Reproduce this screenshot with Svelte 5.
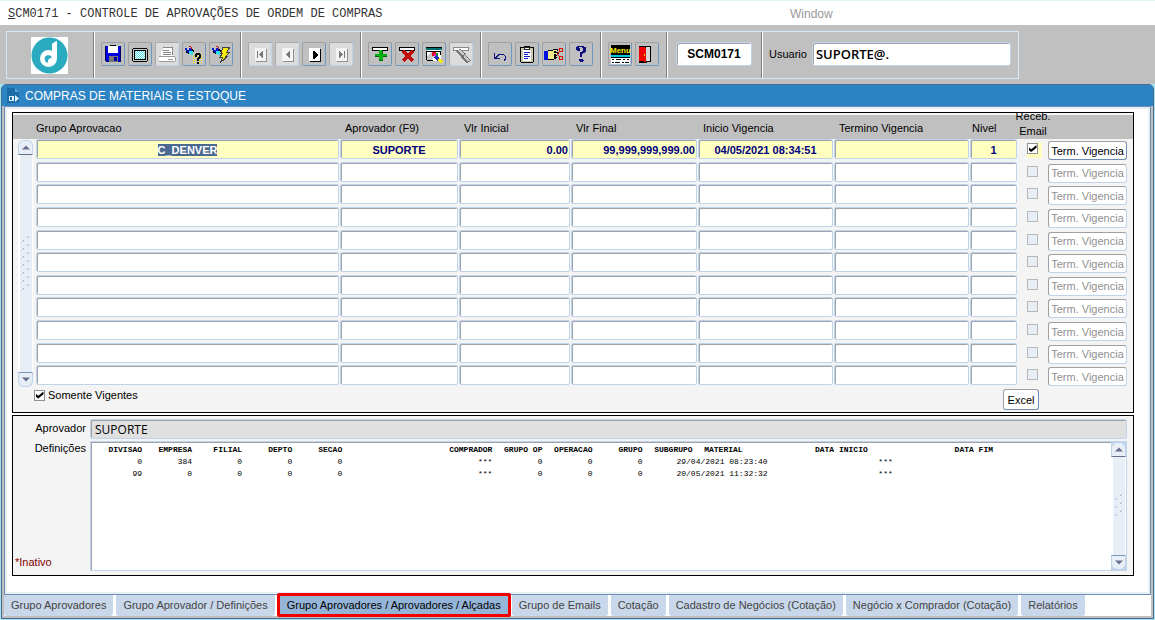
<script>
	import { onMount } from 'svelte';

	const emptyRow = {
		grupo: '',
		aprovador: '',
		vlrInicial: '',
		vlrFinal: '',
		inicio: '',
		termino: '',
		nivel: '',
		email: false
	};

	let rows = $state([
		{
			grupo: 'C_DENVER',
			aprovador: 'SUPORTE',
			vlrInicial: '0.00',
			vlrFinal: '99,999,999,999.00',
			inicio: '04/05/2021 08:34:51',
			termino: '',
			nivel: '1',
			email: true
		},
		...Array.from({ length: 10 }, () => ({ ...emptyRow }))
	]);

	const columns = [
		{ key: 'grupo', label: 'Grupo Aprovacao' },
		{ key: 'aprovador', label: 'Aprovador (F9)' },
		{ key: 'vlrInicial', label: 'Vlr Inicial' },
		{ key: 'vlrFinal', label: 'Vlr Final' },
		{ key: 'inicio', label: 'Inicio Vigencia' },
		{ key: 'termino', label: 'Termino Vigencia' },
		{ key: 'nivel', label: 'Nivel' }
	];

	const definitions = [
		{ values: ['0', '384', '0', '0', '0', '***', '0', '0', '0'], inicio: '29/04/2021 08:23:40', fim: '***' },
		{ values: ['99', '0', '0', '0', '0', '***', '0', '0', '0'], inicio: '20/05/2021 11:32:32', fim: '***' }
	];

	const toolGroups = [
		[
			{ icon: 'save', label: 'Salvar' },
			{ icon: 'screen', label: 'Tela' },
			{ icon: 'print', label: 'Imprimir', disabled: true },
			{ icon: 'query', label: 'Entrar consulta' },
			{ icon: 'execute', label: 'Executar consulta' }
		],
		[
			{ icon: 'first', label: 'Primeiro', disabled: true },
			{ icon: 'prev', label: 'Anterior', disabled: true },
			{ icon: 'next', label: 'Proximo' },
			{ icon: 'last', label: 'Ultimo', disabled: true }
		],
		[
			{ icon: 'add', label: 'Inserir' },
			{ icon: 'remove', label: 'Remover' },
			{ icon: 'clear', label: 'Limpar' },
			{ icon: 'erase', label: 'Apagar', disabled: true }
		],
		[
			{ icon: 'undo', label: 'Desfazer' },
			{ icon: 'list', label: 'Lista de valores' },
			{ icon: 'cut', label: 'Editar' },
			{ icon: 'help', label: 'Ajuda' }
		],
		[
			{ icon: 'menu', label: 'Menu' },
			{ icon: 'exit', label: 'Sair' }
		]
	];

	const tabs = [
		'Grupo Aprovadores',
		'Grupo Aprovador / Definições',
		'Grupo Aprovadores / Aprovadores / Alçadas',
		'Grupo de Emails',
		'Cotação',
		'Cadastro de Negócios (Cotação)',
		'Negócio x Comprador (Cotação)',
		'Relatórios'
	];

	let activeTab = $state(2);
	let onlyActive = $state(true);
	let program = $state('SCM0171');
	let user = $state('SUPORTE@.');
	let approver = $state('SUPORTE');
	let table;

	onMount(() => {
		const first = table.querySelector('tbody input');
		first.focus();
		first.select();
	});
</script>

{#snippet flashlight()}
	<path d="M3 6h2v2h2v-2h3v3h-1v3h-3v-2h-2v-2h-1z" fill="#0018c8" />
	<path d="M7 9h4v4h-2v-1h-2z" fill="#30e0f0" />
	<path d="M7 4h2v1h-2zM9 5h1v2h-1z" fill="#d01010" />
	<path d="M10 7h1v1h1v2h-1v-1h-1zM4 9h1v1h1v1h1v1h-1v-1h-2z" fill="#000" />
{/snippet}

{#snippet page(fill, edge)}
	<path d="M8 7h11v13h-11z" fill={edge} />
	<path d="M7 6h11v13h-11z" fill={fill} />
{/snippet}

{#snippet icon(name)}
	<svg viewBox="1 1 22 22" width="22" height="22" shape-rendering="crispEdges" aria-hidden="true">
		{#if name === 'save'}
			<path d="M4 4h16v16h-15l-1 -1z" fill="#0000e0" />
			<path d="M4 4h1v15h-1zM19 5h1v15h-1zM5 19h15v1h-15z" fill="#000060" />
			<path d="M7 4h10v7h-10z" fill="#fff" />
			<path d="M9 3h6v1h-6z" fill="#000" />
			<path d="M8 14h9v6h-9z" fill="#777" />
			<path d="M13 15h3v4h-3z" fill="#0000a0" />
		{:else if name === 'screen'}
			<path d="M5 6h14v1h1v12h-1v1h-14v-1h-1v-12h1z" fill="#000" />
			<path d="M5 7h14v12h-14z" fill="#c8c8c8" />
			<path d="M6 8h12v10h-12z" fill="#000" />
			<path d="M7 9h10v8h-10z" fill="#fff" />
			{#each [0, 1, 2, 3, 4, 5, 6, 7] as y}
				{#each [0, 2, 4, 6, 8] as x}
					<rect x={7 + x + (y % 2)} y={9 + y} width="1" height="1" fill="#50d8e0" />
				{/each}
			{/each}
		{:else if name === 'print'}
			<path d="M8 5h10v9h-12v-5h2z" fill="#fff" />
			<path d="M8 5h10v1h-10zM17 6h1v7h-1zM8 8h6v1h-6zM8 10h8v1h-8zM8 12h8v1h-8z" fill="#888" />
			<path d="M4 14h16v5h-16z" fill="#fff" />
			<path d="M4 14h16v1h-16zM4 19h16v1h-16zM20 15h1v4h-1zM13 17h5v1h-5z" fill="#999" />
		{:else if name === 'query'}
			{@render flashlight()}
			{#each [0, 2, 4, 6, 8] as y}
				{#each [0, 2, 4, 6, 8] as x}
					<rect x={11 + x} y={12 + y} width="1" height="1" fill="#f8f000" />
				{/each}
			{/each}
			<path d="M13 11h5v1h1v4h-1v1h-1v2h-2v-3h1v-1h1v-2h-2v2h-2v-3h1zM15 20h2v2h-2z" fill="#000" />
		{:else if name === 'execute'}
			{@render flashlight()}
			<path d="M14 5h7l-3 5h3l-4 4h2l-8 7 3 -6h-3l3 -4h-2z" fill="#f8f000" stroke="#444" />
		{:else if name === 'first'}
			{@render page('#f4f4f4', '#909090')}
			<path d="M9 9h1v7h-1zM14 9h1v7h-1v-1h-1v-1h-1v-1h-1v-1h1v-1h1v-1h1z" fill="#777" />
		{:else if name === 'prev'}
			{@render page('#f4f4f4', '#909090')}
			<path d="M14 9h1v7h-1v-1h-1v-1h-1v-1h-1v-1h1v-1h1v-1h1z" fill="#777" />
		{:else if name === 'next'}
			{@render page('#fff', '#000')}
			<path d="M11 9h1v1h1v1h1v1h1v1h-1v1h-1v1h-1v1h-1z" fill="#000" stroke="#000" />
		{:else if name === 'last'}
			{@render page('#f4f4f4', '#909090')}
			<path d="M10 9h1v1h1v1h1v1h1v1h-1v1h-1v1h-1v1h-1zM15 9h1v7h-1z" fill="#777" />
		{:else if name === 'add'}
			<path d="M4 5h16v4h-16z" fill="#000" />
			<path d="M5 6h14v2h-14z" fill="#fff" />
			<path d="M11 8h4v4h4v3h-4v4h-4v-4h-4v-3h4z" fill="#00b010" />
			<path d="M14 8h1v4h-1zM11 18h4v1h-4zM7 14h4v1h-4zM15 14h4v1h-4z" fill="#006008" />
		{:else if name === 'remove'}
			<path d="M4 5h16v4h-16z" fill="#000" />
			<path d="M5 6h14v2h-14z" fill="#fff" />
			<path d="M8 9l10 10M18 9l-10 10" stroke="#c00808" stroke-width="3" />
		{:else if name === 'clear'}
			<path d="M5 5h14v14h-14z" fill="#fff" />
			<path d="M4 5h16v3h-16z" fill="#007070" />
			<path d="M4 5h16v1h-16zM4 9h14v1h-14zM4 10h1v8h-1zM18 9h1v4h-1zM5 18h6v1h-6z" fill="#000" />
			<path d="M5 14l5-4 3 4-3 4h-5z" fill="#c8c8c8" />
			<path d="M10 10h4v4h-4z" fill="#e01020" />
			<path d="M12 12h2v2h-2z" fill="#e020e0" />
			<path d="M14 11h2v3h-2z" fill="#00a010" />
			<path d="M12 15l3 -2 3 4-2 3z" fill="#2030c0" />
			<path d="M15 18l3 -2 3 4-2 1z" fill="#f8f000" />
		{:else if name === 'erase'}
			<path d="M4 5h16v4h-16z" fill="#888" />
			<path d="M5 6h14v2h-14z" fill="#fff" />
			<path d="M9 8l11 12" stroke="#777" stroke-width="5" />
			<path d="M10 8l10 11" stroke="#ccc" stroke-width="2" />
			<path d="M13 15l4 -4" stroke="#666" />
		{:else if name === 'undo'}
			<path d="M6 11v6h6v-1h-3v-1h1v-1h1v-1h5v1h1v3h-1v2h1v-1h1v-4h-1v-1h-1v-1h-6v1h-1v1h-1v1h-1v-4z" fill="#101080" />
		{:else if name === 'list'}
			<path d="M5 5h4v-1h6v1h4v15h-1v1h-12v-1h-1z" fill="#000" />
			<path d="M6 6h12v14h-12z" fill="#c8c8b0" />
			<path d="M8 8h8v11h-8z" fill="#fff" />
			<path d="M9 5h6v3h-6z" fill="#222" />
			<path d="M10 6h4v1h-4z" fill="#fff" />
			<path d="M9 10h6v1h-6zM9 12h4v1h-4zM9 14h6v1h-6zM9 16h4v1h-4z" fill="#1020d0" />
		{:else if name === 'cut'}
			<path d="M2 9h4v9h-4z" fill="#0010e0" />
			<path d="M6 8h5v-1h5v2h-2v1h3v2h-3v5h-2v1h-6z" fill="#000" />
			<path d="M6 9h5v-1h4v1h-3v2h4v1h-4v5h-6z" fill="#f0e890" />
			<path d="M12 13h3v1h-3zM12 15h3v1h-3z" fill="#000" />
			<path d="M15 12l3 -3M15 12l3 3" stroke="#e00000" />
			<circle cx="19" cy="8" r="2" fill="none" stroke="#e00000" />
			<circle cx="19" cy="16" r="2" fill="none" stroke="#e00000" />
		{:else if name === 'help'}
			<path d="M8 4h7v1h2v5h-1v1h-2v1h-1v3h-2v-5h2v-1h1v-3h-1v-1h-3v1h1v3h-3v-1h-1v-3h1zM10 17h4v1h1v1h-1v1h-3v-1h-1z" fill="#101080" />
		{:else if name === 'menu'}
			<path d="M3 3h19v9h-19z" fill="#000" />
			<path d="M3 13h19v2h-19z" fill="#00c8d8" />
			<path d="M3 15h19v7h-19z" fill="#fff" />
			<path d="M3 12h19v1h-19zM3 15h19v1h-19zM4 17h2v1h-2zM8 17h5v1h-5zM15 17h2v1h-2zM19 17h2v1h-2zM4 20h2v1h-2zM7 20h5v1h-5zM14 20h2v1h-2zM17 20h4v1h-4z" fill="#000" />
			<text x="2" y="11" class="menu-text">Menu</text>
		{:else if name === 'exit'}
			<path d="M4 4h12v16h-4v1h-8z" fill="#000" />
			<path d="M11 5h4v14h-4z" fill="#d8d8d8" />
			<path d="M4 5h6v1h1v14h-2v-1h-5z" fill="#f00000" />
			<path d="M9 12h1v2h-1z" fill="#f8f000" />
		{/if}
	</svg>
{/snippet}

{#snippet scrollbar(name, count)}
	<div class="scrollbar">
		<button class="arrow up" aria-label="{name} acima">
			<svg viewBox="0 0 8 5" width="8" height="5"><path d="M0 4.5L4 0.5L8 4.5z" /></svg>
		</button>
		<div class="track">
			<svg width="8" height={count * 8 + 2} shape-rendering="crispEdges" aria-hidden="true">
				{#each Array(count) as _, i}
					<path d="M5 {i * 8 + 1}h1v1h-1zM0 {i * 8 + 5}h1v1h-1z" fill="#fff" />
					<path d="M6 {i * 8 + 1}h1v1h-1v1h-1v-1h1zM1 {i * 8 + 5}h1v1h-1v1h-1v-1h1z" fill="#8ea9c8" />
				{/each}
			</svg>
		</div>
		<button class="arrow down" aria-label="{name} abaixo">
			<svg viewBox="0 0 8 5" width="8" height="5"><path d="M0 0.5L4 4.5L8 0.5z" /></svg>
		</button>
	</div>
{/snippet}

<div class="app">
	<header class="menubar">
		<a class="program" href="#programa"><u>S</u>CM0171 - CONTROLE DE APROVAÇÕES DE ORDEM DE COMPRAS</a>
		<a class="window-menu" href="#window">Window</a>
	</header>

	<div class="toolbar">
		<div class="frame">
			<div class="group brand">
				<svg viewBox="0 0 37 37" width="37" height="37" aria-label="Logo">
					<path d="M0 0h37v37h-37z" fill="#fff" />
					<circle cx="18.5" cy="18.5" r="18" fill="#2babc0" />
					<path d="M26 4v17.500a8.500 8.500 0 1 1-8.500-8.500q2 0 3.500.8v-6.800q2.500-2.500 5-3z" fill="#fff" />
					<path d="M21 20.500a3.800 3.800 0 1 0-3.500 5.300q-1-1-.5-2.500 1.500-2.500 4-2.800z" fill="#2babc0" />
				</svg>
			</div>
			{#each toolGroups as group}
				<div class="group">
					{#each group as tool}
						<button class="tool" disabled={tool.disabled} aria-label={tool.label}>
							{@render icon(tool.icon)}
						</button>
					{/each}
				</div>
			{/each}
			<div class="group">
				<input class="code" aria-label="Programa" bind:value={program} />
			</div>
			<div class="group user">
				<label for="user">Usuario</label>
				<input id="user" bind:value={user} />
			</div>
		</div>
	</div>

	<div class="desktop">
		<main class="window">
			<h1>
				<svg viewBox="0 0 12 15" width="12" height="15" aria-hidden="true">
					<path d="M0 0h8l4 4v11h-12z" fill="#1c6ca8" />
					<path d="M8 0v4h4z" fill="#5aa5dc" />
					<path d="M2 8h3v1h-2v3h2v1h-3zM5 8h2v5h-2zM8 7l4 3.500-4 3.500z" fill="#dff0ff" />
				</svg>
				COMPRAS DE MATERIAIS E ESTOQUE
			</h1>

			<div class="panel">
				<section class="box">
					<div class="records">
						<div class="rail">{@render scrollbar('Registros', 7)}</div>
						<table class="grid" bind:this={table}>
							<colgroup>
								<col />
								<col class="w-aprovador" />
								<col class="w-inicial" />
								<col class="w-final" />
								<col class="w-date" />
								<col class="w-date" />
								<col class="w-nivel" />
								<col class="w-email" />
								<col class="w-action" />
							</colgroup>
							<thead>
								<tr>
									{#each columns as column}
										<th class={column.key}>{column.label}</th>
									{/each}
									<th class="email"><span class="stack"><span>Receb.</span><span>Email</span></span></th>
									<th></th>
								</tr>
							</thead>
							<tbody>
								{#each rows as row, i}
									<tr class:current={i === 0}>
										{#each columns as column}
											<td>
												<input
													class="field {column.key}"
													aria-label="{column.label} {i + 1}"
													bind:value={row[column.key]}
												/>
											</td>
										{/each}
										<td class="check-cell">
											<span class="check-back">
												<input
													type="checkbox"
													aria-label="Receb. Email {i + 1}"
													disabled={i > 0}
													bind:checked={row.email}
												/>
											</span>
										</td>
										<td class="action-cell">
											<button class="push term" disabled={i > 0}>Term. Vigencia</button>
										</td>
									</tr>
								{/each}
							</tbody>
						</table>
					</div>
					<div class="footer">
						<label class="only-active">
							<input type="checkbox" bind:checked={onlyActive} />
							Somente Vigentes
						</label>
						<button class="push excel">Excel</button>
					</div>
				</section>

				<section class="box details">
					<label for="approver">Aprovador</label>
					<input id="approver" class="field approver" readonly bind:value={approver} />
					<div class="side">
						<span id="definitions">Definições</span>
						<span class="inactive">*Inativo</span>
					</div>
					<div class="definitions">
						<table aria-labelledby="definitions">
							<colgroup>
								<col span="5" class="w-def" />
								<col class="w-comprador" />
								<col span="5" class="w-def" />
								<col class="w-gap" />
								<col class="w-data" />
								<col class="w-gap" />
								<col class="w-data" />
							</colgroup>
							<thead>
								<tr>
									<th>DIVISAO</th>
									<th>EMPRESA</th>
									<th>FILIAL</th>
									<th>DEPTO</th>
									<th>SECAO</th>
									<th>COMPRADOR</th>
									<th>GRUPO OP</th>
									<th>OPERACAO</th>
									<th>GRUPO</th>
									<th>SUBGRUPO</th>
									<th>MATERIAL</th>
									<th colspan="2">DATA INICIO</th>
									<th colspan="2">DATA FIM</th>
								</tr>
							</thead>
							<tbody>
								{#each definitions as def}
									<tr>
										{#each def.values as value}
											<td>{value}</td>
										{/each}
										<td colspan="3">{def.inicio}</td>
										<td colspan="2">{def.fim}</td>
										<td></td>
									</tr>
								{/each}
							</tbody>
						</table>
						{@render scrollbar('Definições', 3)}
					</div>
				</section>
			</div>

			<nav class="tabs">
				{#each tabs as tab, i}
					<button class="tab" class:active={i === activeTab} onclick={() => (activeTab = i)}>{tab}</button>
				{/each}
			</nav>
		</main>
	</div>
</div>

<style>
	:global(body) {
		margin: 0;
		background: #a4e4ee;
	}

	.app,
	.app button,
	.app input {
		font-family: 'Liberation Sans', Arial, sans-serif;
		font-size: 11px;
	}

	.app {
		color: #000;
	}

	input,
	button {
		margin: 0;
		padding: 0;
		box-sizing: border-box;
		outline: none;
	}

	svg {
		display: block;
	}

	.menubar {
		display: flex;
		align-items: center;
		height: 25px;
		box-sizing: border-box;
		padding: 2px 8px 0;
		border-top: 1px solid #e4f4f6;
		background: #fff;
	}

	.menubar a {
		color: #333;
		text-decoration: none;
	}

	.program {
		flex: 0 0 782px;
		font-family: 'Liberation Mono', 'Courier New', monospace;
		font-size: 12px;
	}

	.menubar .window-menu {
		color: #999;
		font-size: 12px;
	}

	.toolbar {
		display: flex;
		padding: 6px 6px 5px;
		background: #c0c0c0;
	}

	.frame {
		display: flex;
		border: 1px solid #d8e6f6;
	}

	.group {
		display: flex;
		align-items: center;
		gap: 3px;
		box-sizing: border-box;
		height: 46px;
		padding: 0 7px 2px 6px;
		border-left: 1px solid #fff;
		border-right: 1px solid #808080;
	}

	.group:last-child {
		border-right: 0;
	}

	.brand {
		padding: 0 25px 0 24px;
		border-left: 0;
	}

	.tool {
		width: 24px;
		height: 24px;
		border: 1px solid;
		border-color: #a0a0a0 #6f96bf #6f96bf #a0a0a0;
		border-radius: 2px;
		background: #c0c0c0;
	}

	.tool:disabled {
		border-color: #a8a8a8 #bfd3ea #bfd3ea #a8a8a8;
		background: #dcdcdc;
	}

	.menu-text {
		font: bold 8px 'Liberation Sans', Arial, sans-serif;
		fill: #f8f000;
	}

	.group input {
		height: 24px;
		border: 1px solid #bfd3ea;
		border-radius: 3px;
		background: #fff;
		box-shadow: inset 1px 1px 0 #a0a4a8;
	}

	.group .code {
		width: 76px;
		margin: 0 2px;
		font-size: 12px;
		font-weight: 700;
		text-align: center;
	}

	.user {
		gap: 5px;
	}

	.group.user input {
		width: 199px;
		padding: 0 3px;
		font-family: 'Open Sans', 'Noto Sans', sans-serif;
		font-size: 13px;
		font-weight: 600;
	}

	.desktop {
		padding: 0 1px 1px;
		background: #a4e4ee;
	}

	.window {
		border: 1px solid #4a6890;
		border-radius: 5px 5px 0 0;
		background: #c0c0c0;
	}

	h1 {
		display: flex;
		align-items: center;
		gap: 6px;
		height: 21px;
		margin: 0;
		padding: 0 5px;
		border-radius: 4px 4px 0 0;
		background: #2c84c4;
		color: #fff;
		font-size: 12px;
		font-weight: 400;
	}

	.panel {
		margin: 0 2px;
		padding: 5px 16px 18px 7px;
		border: 1px solid #6f8db3;
		background: #fff;
		box-shadow: inset 0 0 0 2px #e8eef6;
	}

	.box {
		border: 1px solid #000;
		background: #f4f4f4;
	}

	.records {
		display: flex;
		padding-top: 2px;
	}

	.rail {
		display: flex;
		flex: 0 0 23px;
		box-sizing: border-box;
		padding: 1px 3px 1px 5px;
		border-top: 24px solid #c0c0c0;
	}

	.scrollbar {
		display: flex;
		flex: 0 0 15px;
		flex-direction: column;
		box-sizing: border-box;
	}

	.track {
		display: flex;
		flex: 1;
		align-items: center;
		justify-content: center;
		border-left: 2px solid #fff;
		border-right: 1px solid #fff;
		background: #e8eef6;
	}

	.arrow {
		display: flex;
		align-items: center;
		justify-content: center;
		height: 15px;
		border: 1px solid #bfd3ea;
		background: #e8eef6;
		fill: #66708c;
	}

	.up {
		border-bottom-color: #66708c;
		border-radius: 6px 6px 0 0;
	}

	.down {
		border-top-color: #8099b8;
		border-radius: 0 0 6px 6px;
	}

	.grid {
		flex: 1;
		width: 100%;
		height: 273px;
		table-layout: fixed;
		border-collapse: collapse;
	}

	.w-aprovador {
		width: 119px;
	}

	.w-inicial {
		width: 112px;
	}

	.w-final {
		width: 127px;
	}

	.w-date {
		width: 136px;
	}

	.w-nivel {
		width: 48px;
	}

	.w-email {
		width: 30px;
	}

	.w-action {
		width: 85px;
	}

	.grid th {
		height: 24px;
		padding: 2px 0 0 5px;
		box-sizing: border-box;
		background: #c0c0c0;
		font-weight: 400;
		text-align: left;
		white-space: nowrap;
	}

	.grid th.grupo {
		padding-left: 0;
	}

	.grid th.nivel {
		padding-left: 2px;
	}

	.grid th.email {
		padding: 0;
	}

	.stack {
		display: flex;
		flex-direction: column;
		align-items: center;
		justify-content: flex-end;
		height: 24px;
		line-height: 15px;
	}

	.grid td {
		padding: 0 1px 0 0;
		vertical-align: top;
	}

	.field {
		display: block;
		width: 100%;
		height: 20px;
		padding: 1px 2px 0;
		border: 1px solid #bfd3ea;
		border-radius: 2px;
		background: #fff;
		box-shadow: inset 1px 1px 0 #a0a4a8;
	}

	.grid .field {
		color: #000080;
		font-weight: 700;
		text-align: center;
	}

	.grid .field.vlrInicial,
	.grid .field.vlrFinal {
		padding-right: 1px;
		text-align: right;
	}

	.current .field,
	.current .check-back {
		background: #ffffc0;
	}

	.field::selection {
		background: #4a6890;
		color: #fff;
	}

	.grid .check-cell {
		padding: 4px 0 0 9px;
	}

	.check-back {
		display: block;
		width: 15px;
		height: 15px;
	}

	input[type='checkbox'] {
		display: grid;
		place-items: center;
		flex: none;
		width: 11px;
		height: 11px;
		border: 1px solid #909090;
		background: #fff;
		appearance: none;
	}

	input[type='checkbox']:disabled {
		border-color: #b8b8b8;
		background: #e8eef6;
	}

	input[type='checkbox']:checked::before {
		content: '';
		width: 8px;
		height: 7px;
		background: #000;
		clip-path: polygon(0 30%, 35% 60%, 100% 0, 100% 38%, 35% 100%, 0 72%);
	}

	.grid .action-cell {
		padding: 2px 6px 0 0;
	}

	.push {
		display: block;
		border: 1px solid;
		border-color: #a0a0a0 #6f8db3 #6f8db3 #a0a0a0;
		border-radius: 3px;
		background: #fff;
		color: #000;
		white-space: nowrap;
	}

	.push:disabled {
		border-color: #a0a0a0 #bfd3ea #bfd3ea #a0a0a0;
		color: #909090;
	}

	.term {
		width: 100%;
		height: 19px;
	}

	.excel {
		width: 36px;
		height: 21px;
	}

	.footer {
		display: flex;
		align-items: flex-start;
		justify-content: space-between;
		padding: 1px 94px 2px 21px;
	}

	.only-active {
		display: flex;
		align-items: center;
		gap: 3px;
	}

	.details {
		display: grid;
		grid-template-columns: 77px 1fr;
		row-gap: 2px;
		margin-top: 2px;
		padding: 3px 6px 4px 0;
	}

	.details label {
		padding: 3px 4px 0 0;
		text-align: right;
	}

	.details .approver {
		padding: 0 4px;
		background: #e0e0e0;
		font-family: 'Open Sans', 'Noto Sans', sans-serif;
		font-size: 12px;
	}

	.side {
		display: flex;
		flex-direction: column;
		justify-content: space-between;
		padding: 1px 4px 3px 2px;
	}

	#definitions {
		text-align: right;
	}

	.inactive {
		color: #800000;
	}

	.definitions {
		display: flex;
		justify-content: space-between;
		box-sizing: border-box;
		height: 130px;
		border: 1px solid #bfd3ea;
		background: #fff;
		box-shadow: inset 1px 1px 0 #a0a4a8;
	}

	.definitions .scrollbar {
		background: #bfd3ea;
	}

	.definitions table {
		align-self: flex-start;
		width: 901px;
		margin: 2px 0 0 1px;
		table-layout: fixed;
		border-collapse: collapse;
		font-family: 'Liberation Mono', 'Courier New', monospace;
		font-size: 8px;
		line-height: 12px;
	}

	.definitions th,
	.definitions td {
		padding: 0;
		text-align: right;
		white-space: nowrap;
	}

	.w-def {
		width: 50px;
	}

	.w-comprador {
		width: 150px;
	}

	.w-gap {
		width: 25px;
	}

	.w-data {
		width: 100px;
	}

	.tabs {
		display: flex;
		gap: 3px;
		margin: 0 2px 2px;
		background: #fff;
	}

	.app .tab {
		height: 21px;
		padding: 0 7px 1px;
		border: 0;
		border-radius: 0 0 3px 3px;
		background: #c9d7ea;
		color: #444;
		white-space: nowrap;
	}

	.app .tab.active {
		height: 24px;
		margin: -2px -2px -1px -1px;
		border: 3px solid #f00000;
		border-radius: 2px;
		background: #94b4d8;
		color: #000;
	}
</style>
